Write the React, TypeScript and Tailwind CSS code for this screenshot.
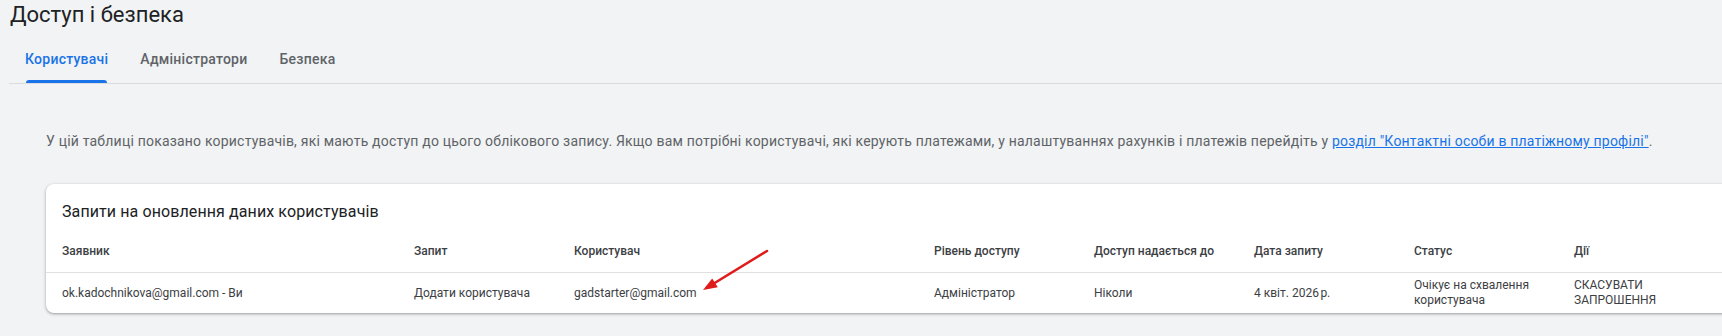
const columns = [
  'Заявник',
  'Запит',
  'Користувач',
  'Рівень доступу',
  'Доступ надається до',
  'Дата запиту',
  'Статус',
  'Дії',
];

const tabs = ['Користувачі', 'Адміністратори', 'Безпека'];

function RedArrow() {
  // hand-drawn pointer that sits over the table
  return (
    <svg
      className="pointer-events-none absolute left-0 top-0"
      width="1722"
      height="336"
      viewBox="0 0 1722 336"
    >
      <line x1="767" y1="251" x2="713" y2="284" stroke="#e01b1b" strokeWidth="2.6" strokeLinecap="round" />
      <polygon points="703,290 712.2,278.4 717.8,287.2" fill="#e01b1b" />
    </svg>
  );
}

export default function App() {
  return (
    <div className="relative h-[336px] w-[1722px] overflow-hidden bg-[#f1f3f4] font-['Roboto',sans-serif]">
      {/* Page title */}
      <h1 className="pl-[10px] text-[22px] leading-[30px] text-[#202124]">Доступ і безпека</h1>

      {/* Tabs */}
      <div className="ml-[9px] mt-[6px] flex border-b border-[#dadce0]">
        {tabs.map((tab, i) => (
          <div key={tab} className="relative flex h-[47px] items-center px-4">
            <span
              className={`text-[14px] font-medium tracking-[0.25px] ${i === 0 ? 'text-[#1a73e8]' : 'text-[#5f6368]'}`}
            >
              {tab}
            </span>
            {i === 0 && (
              <div className="absolute bottom-0 left-[17px] right-[17px] h-[3px] rounded-t-[3px] bg-[#1a73e8]" />
            )}
          </div>
        ))}
      </div>

      {/* Info text */}
      <p className="ml-[46px] mt-[47px] whitespace-nowrap text-[14px] leading-[20px] tracking-[0.2px] text-[#5f6368]">
        У цій таблиці показано користувачів, які мають доступ до цього облікового запису. Якщо вам потрібні
        користувачі, які керують платежами, у налаштуваннях рахунків і платежів перейдіть у{' '}
        <a className="text-[#1a73e8] underline">розділ "Контактні особи в платіжному профілі"</a>.
      </p>

      {/* Requests card */}
      <div className="ml-[46px] mt-[33px] w-[1700px] rounded-lg bg-white shadow-[0_1px_2px_rgba(60,64,67,0.3),0_1px_3px_1px_rgba(60,64,67,0.15)]">
        <div className="px-4 pt-4 text-[16px] leading-[24px] tracking-[0.1px] text-[#202124]">
          Запити на оновлення даних користувачів
        </div>

        <div className="grid grid-cols-[352px_160px_360px_160px_160px_160px_160px_120px] border-b border-[#e0e0e0] px-4 pb-[11px] pt-[17px] text-[12px] font-medium leading-[20px] text-[#3c4043]">
          {columns.map((c) => (
            <div key={c}>{c}</div>
          ))}
        </div>

        <div className="grid h-[40px] grid-cols-[352px_160px_360px_160px_160px_160px_160px_120px] items-center px-4 text-[12px] leading-[15px] text-[#3c4043]">
          <div>ok.kadochnikova@gmail.com - Ви</div>
          <div>Додати користувача</div>
          <div>gadstarter@gmail.com</div>
          <div>Адміністратор</div>
          <div>Ніколи</div>
          <div>4 квіт. 2026{'\u202F'}р.</div>
          <div className="pr-6">Очікує на схвалення користувача</div>
          <div>СКАСУВАТИ ЗАПРОШЕННЯ</div>
        </div>
      </div>

      <RedArrow />
    </div>
  );
}
